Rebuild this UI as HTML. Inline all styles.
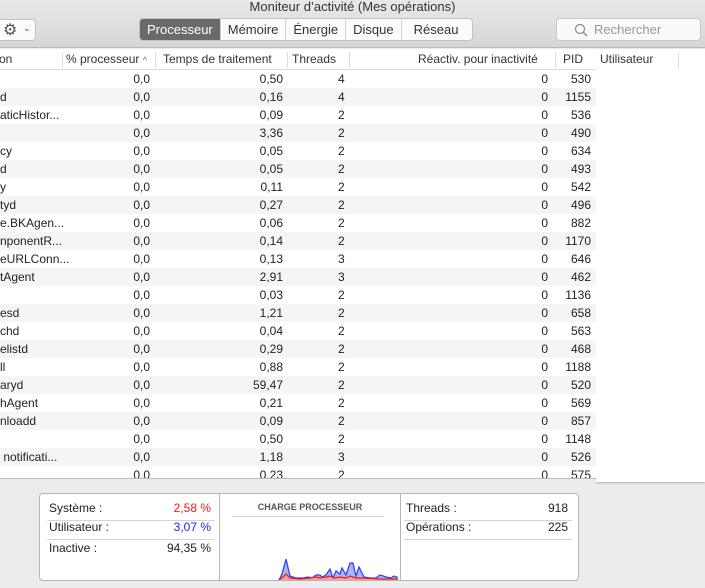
<!DOCTYPE html>
<html><head><meta charset="utf-8"><style>
*{margin:0;padding:0;box-sizing:border-box}
body{width:705px;height:588px;overflow:hidden;background:#ececec;font-family:"Liberation Sans",sans-serif;font-size:12px;color:#222;position:relative}
.abs{position:absolute}
#tb{left:0;top:0;width:705px;height:48px;background:linear-gradient(#e9e9e9,#d6d6d6);border-bottom:1px solid #b9b9b9}
.title{left:0;width:705px;top:0;text-align:center;font-size:13px;color:#333;line-height:14px}
.seg{top:18px;height:23px;border:1px solid #c3c3c3;background:#fbfbfb;border-radius:4px;display:flex;overflow:hidden;left:139px}
.seg div{padding:0 7px;line-height:21px;font-size:13px;border-right:1px solid #d0d0d0;color:#333}
.seg div.on{background:#6a6a6a;color:#fff}
#tab{left:0;top:49px;width:596px;height:430px;background:#fff;overflow:hidden;border-bottom:1px solid #bbb}
#right{left:596px;top:49px;width:109px;height:433px;background:#fff;box-shadow:0 1px 2px rgba(0,0,0,.25)}
.hdr{left:0;top:0;width:596px;height:21px;border-bottom:1px solid #ddd;background:#fff}
.h{top:3px;font-size:12px;color:#333}
.sep{top:3px;width:1px;height:16px;background:#ddd}
.row{position:absolute;left:0;width:596px;height:18px;line-height:18px}
.row.g{background:#f5f5f5}
.row span{position:absolute}
.box{left:39px;top:493px;width:540px;height:88px;background:#fff;border:1px solid #b5b5b5;border-radius:4px;overflow:hidden}
.ln{position:absolute;height:1px;background:#d5d5d5}
</style></head><body>
<div id="tb" class="abs"></div>
<div class="abs title">Moniteur d’activité (Mes opérations)</div>
<div class="abs" style="left:-5px;top:19px;width:41px;height:22px;border:1px solid #c3c3c3;border-radius:4px;background:#fbfbfb"><span style="position:absolute;left:7px;top:0px;font-size:16px;color:#555">⚙</span><span style="position:absolute;left:27px;top:3px;font-size:9px;color:#555">⌄</span></div>
<div class="abs seg"><div class="on">Processeur</div><div>Mémoire</div><div>Énergie</div><div>Disque</div><div style="border:none;padding:0 14px 0 12px">Réseau</div></div>
<div class="abs" style="left:556px;top:18px;width:145px;height:23px;border:1px solid #c8c8c8;border-radius:4px;background:#fafafa;color:#999;font-size:13px;line-height:21px;padding-left:37px">Rechercher
<svg style="position:absolute;left:17px;top:4px" width="14" height="14" viewBox="0 0 14 14"><circle cx="6" cy="6" r="4.5" fill="none" stroke="#888" stroke-width="1.2"/><path d="M9.3 9.3L13 13" stroke="#888" stroke-width="1.3"/></svg></div>
<div id="right" class="abs"><span style="position:absolute;left:4px;top:3px;color:#333">Utilisateur</span><div style="position:absolute;left:82px;top:3px;width:1px;height:16px;background:#ddd"></div></div>
<div id="tab" class="abs">
<div class="abs hdr"></div>
<span class="abs h" style="left:-1px">on</span>
<div class="abs sep" style="left:62px"></div>
<span class="abs h" style="left:66px">% processeur <span style="font-size:9px;color:#666">^</span></span>
<div class="abs sep" style="left:155px"></div>
<span class="abs h" style="left:163px">Temps de traitement</span>
<div class="abs sep" style="left:287px"></div>
<span class="abs h" style="left:292px">Threads</span>
<div class="abs sep" style="left:349px"></div>
<span class="abs h" style="left:418px">Réactiv. pour inactivité</span>
<div class="abs sep" style="left:555px"></div>
<span class="abs h" style="left:563px">PID</span>
<div id="rows"></div>
</div>
<div class="abs box">
<div style="position:absolute;left:179px;top:0;width:1px;height:88px;background:#b5b5b5"></div>
<div style="position:absolute;left:360px;top:0;width:1px;height:88px;background:#b5b5b5"></div>
<span class="abs" style="left:9px;top:7px">Système :</span><span class="abs" style="right:367px;top:7px;color:#f01818">2,58 %</span>
<div class="ln" style="left:7px;top:26px;width:168px"></div>
<span class="abs" style="left:9px;top:26px">Utilisateur :</span><span class="abs" style="right:367px;top:26px;color:#2222ee">3,07 %</span>
<div class="ln" style="left:7px;top:45px;width:168px"></div>
<span class="abs" style="left:9px;top:47px">Inactive :</span><span class="abs" style="right:367px;top:47px">94,35 %</span>
<span class="abs" style="left:180px;width:180px;text-align:center;top:8px;font-size:9px;font-weight:bold;color:#555">CHARGE PROCESSEUR</span>
<div class="ln" style="left:192px;top:22px;width:152px"></div>
<svg style="position:absolute;left:0;top:0" width="540" height="88" viewBox="0 0 540 88"><g transform="translate(-40,-494)">
<path d="M279 580 L282 574 L286 559 L290 576 L296 578 L303 578 L308 577 L312 578 L316 575 L320 575 L322 577 L326 575 L330 569 L333 578 L336 571 L340 574 L342 568 L346 575 L350 563 L353 563 L356 576 L359 567 L364 577 L370 578 L376 578 L380 575 L383 576 L386 577 L391 578 L394 576 L397 577 L397 581 L279 581 Z" fill="#a7b6f5" stroke="#2b3ff0" stroke-width="1.2"/>
<path d="M279 580 L283 577 L286 574 L290 578 L300 579 L310 578 L316 577 L320 578 L326 577 L330 576 L334 578 L340 577 L346 578 L350 576 L356 578 L362 578 L380 579 L397 579 L397 581 L279 581 Z" fill="#f7a0a0" stroke="#f01818" stroke-width="1.2"/></g></svg>
<span class="abs" style="left:366px;top:7px">Threads :</span><span class="abs" style="right:10px;top:7px">918</span>
<div class="ln" style="left:364px;top:26px;width:168px"></div>
<span class="abs" style="left:366px;top:26px">Opérations :</span><span class="abs" style="right:10px;top:26px">225</span>
<div class="ln" style="left:364px;top:45px;width:168px"></div>
</div>
<script>
var d=[["","0,50",4,530],["d","0,16",4,1155],["aticHistor...","0,09",2,536],["","3,36",2,490],["cy","0,05",2,634],["d","0,05",2,493],["y","0,11",2,542],["tyd","0,27",2,496],["e.BKAgen...","0,06",2,882],["nponentR...","0,14",2,1170],["eURLConn...","0,13",3,646],["tAgent","2,91",3,462],["","0,03",2,1136],["esd","1,21",2,658],["chd","0,04",2,563],["elistd","0,29",2,468],["ll","0,88",2,1188],["aryd","59,47",2,520],["hAgent","0,21",2,569],["nloadd","0,09",2,857],["","0,50",2,1148],[" notificati...","1,18",3,526],["","0,23",2,575]];
var h="";d.forEach(function(r,i){h+='<div class="row'+(i%2?' g':'')+'" style="top:'+(21+i*18)+'px"><span style="left:0;white-space:pre">'+r[0]+'</span><span style="right:446px">0,0</span><span style="right:313px">'+r[1]+'</span><span style="left:338px">'+r[2]+'</span><span style="right:48px">0</span><span style="right:5px">'+r[3]+'</span></div>';});
document.getElementById("rows").innerHTML=h;
</script>
</body></html>
